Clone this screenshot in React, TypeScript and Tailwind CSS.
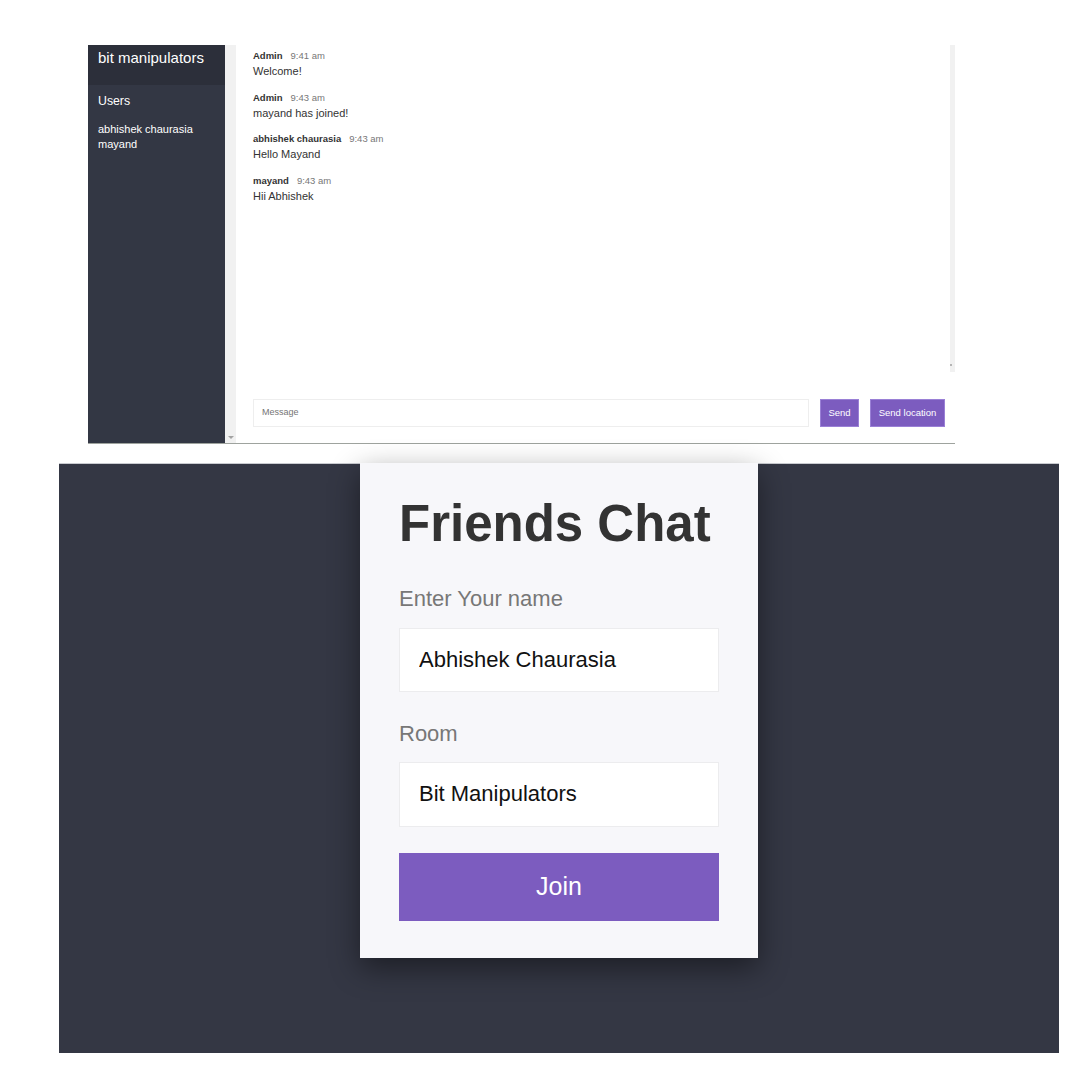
import React from "react";

const messages = [
  { name: "Admin", time: "9:41 am", text: "Welcome!" },
  { name: "Admin", time: "9:43 am", text: "mayand has joined!" },
  { name: "abhishek chaurasia", time: "9:43 am", text: "Hello Mayand" },
  { name: "mayand", time: "9:43 am", text: "Hii Abhishek" },
];

const users = ["abhishek chaurasia", "mayand"];

const ChatPreview: React.FC = () => (
  <div className="ml-[88px] mt-[45px] flex h-[399px] w-[867px] border-b-[1.5px] border-[#9ea39e]">
    {/* sidebar */}
    <div className="flex w-[137px] flex-col bg-[#333744] text-white">
      <div className="h-[40px] bg-[#2c2f3a] px-[10px] pt-[5px] text-[15px] leading-none">
        bit manipulators
      </div>
      <div className="mt-[10px] px-[10px] text-[12.3px] leading-none">Users</div>
      <ul className="mt-[15px] px-[10px] text-[11px] leading-[14.4px]">
        {users.map((u) => (
          <li key={u}>{u}</li>
        ))}
      </ul>
    </div>

    {/* scrollbar strip */}
    <div className="flex w-[11px] flex-col items-center justify-end bg-[#f1f1f1] pb-[4px]">
      <div className="h-0 w-0 border-x-[3px] border-t-[3px] border-x-transparent border-t-[#a3a3a3]" />
    </div>

    {/* main chat */}
    <div className="flex flex-1 flex-col bg-white">
      <div className="flex h-[354px]">
        <div className="flex-1 pl-[17px] pt-[4px]">
          {messages.map((m, i) => (
            <div key={i} className="mb-[11.7px]">
              <p className="text-[9.5px] leading-[14px]">
                <span className="font-bold text-[#333]">{m.name}</span>
                <span className="ml-[8px] text-[#777]">{m.time}</span>
              </p>
              <p className="text-[11px] leading-[16px] text-[#333]">{m.text}</p>
            </div>
          ))}
        </div>
        <div className="flex h-[327px] w-[5px] flex-col justify-end bg-[#f1f1f1] pb-[6px]">
          <div className="h-[2px] w-[2px] bg-[#b5b5b5]" />
        </div>
      </div>
      <div className="flex h-[28px] items-stretch gap-[11px] pl-[17px] pr-[10px]">
        <input
          placeholder="Message"
          className="flex-1 border border-[#eeeeee] px-[8px] text-[9px] text-[#333] outline-none placeholder:text-[#757575]"
          style={{ fontFamily: '"Liberation Sans", Arial, sans-serif' }}
        />
        <button className="w-[39px] border border-[#9a80d6] bg-[#7c5cbf] text-[9.5px] text-white">
          Send
        </button>
        <button className="w-[75px] border border-[#9a80d6] bg-[#7c5cbf] text-[9.5px] text-white">
          Send location
        </button>
      </div>
    </div>
  </div>
);

const JoinPanel: React.FC = () => (
  <div className="ml-[59px] mt-[18.5px] flex h-[590px] w-[1000px] justify-center border-t border-[#c9cbd0] bg-[#343744]">
    <div className="-mt-px h-[495px] w-[398px] bg-[#f7f7fa] px-[39px] pt-[35px] shadow-[0_10px_28px_rgba(0,0,0,0.45)]">
      <h1 className="text-[51px] font-bold leading-none text-[#333]">Friends Chat</h1>
      <label className="mt-[39px] block text-[22px] leading-none text-[#777]">Enter Your name</label>
      <input
        defaultValue="Abhishek Chaurasia"
        className="mt-[18px] h-[64px] w-full border border-[#ececee] bg-white px-[19px] text-[22px] text-[#111] outline-none"
        style={{ fontFamily: '"Liberation Sans", Arial, sans-serif' }}
      />
      <label className="mt-[31px] block text-[22px] leading-none text-[#777]">Room</label>
      <input
        defaultValue="Bit Manipulators"
        className="mt-[17px] h-[65px] w-full border border-[#ececee] bg-white px-[19px] text-[22px] text-[#111] outline-none"
        style={{ fontFamily: '"Liberation Sans", Arial, sans-serif' }}
      />
      <button className="mt-[26px] h-[68px] w-full bg-[#7c5cbf] text-[25px] text-white">Join</button>
    </div>
  </div>
);

const App: React.FC = () => {
  return (
    <div className="h-[1080px] w-[1080px] overflow-hidden bg-white font-['Liberation_Sans',Arial,sans-serif]">
      <ChatPreview />
      <JoinPanel />
    </div>
  );
};

export default App;
